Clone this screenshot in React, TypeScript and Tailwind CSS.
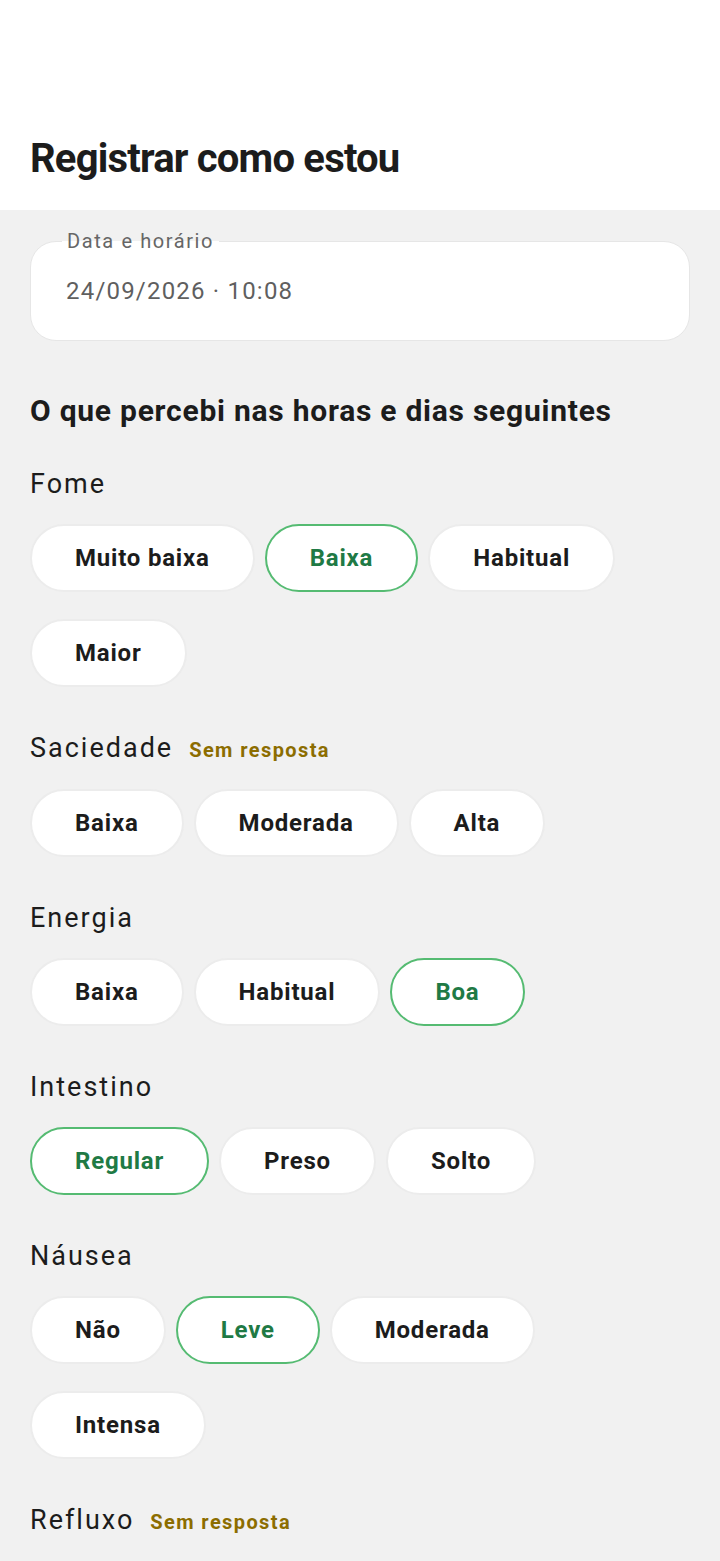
import React from "react";

type Question = {
  label: string;
  options: string[];
  selected?: string;
};

const QUESTIONS: Question[] = [
  { label: "Fome", options: ["Muito baixa", "Baixa", "Habitual", "Maior"], selected: "Baixa" },
  { label: "Saciedade", options: ["Baixa", "Moderada", "Alta"] },
  { label: "Energia", options: ["Baixa", "Habitual", "Boa"], selected: "Boa" },
  { label: "Intestino", options: ["Regular", "Preso", "Solto"], selected: "Regular" },
  { label: "Náusea", options: ["Não", "Leve", "Moderada", "Intensa"], selected: "Leve" },
  { label: "Refluxo", options: ["Não", "Leve", "Moderada", "Intensa"] },
];

function Chip({ label, active }: { label: string; active: boolean }) {
  return (
    <button
      type="button"
      className={
        active
          ? "h-[68px] rounded-full border-[2.5px] border-[#55bb72] bg-white px-[43px] text-[24px] font-bold tracking-[0.8px] text-[#1f7a45]"
          : "h-[68px] rounded-full border-[2.5px] border-[#ececec] bg-white px-[43px] text-[24px] font-bold tracking-[0.8px] text-[#1c1c1c]"
      }
    >
      {label}
    </button>
  );
}

function QuestionBlock({ q }: { q: Question }) {
  return (
    <section>
      <div className="flex items-baseline gap-4">
        <h3 className="text-[27px] leading-[32px] tracking-[2px] text-[#1c1c1c]">{q.label}</h3>
        {!q.selected && (
          <span className="text-[20px] font-bold tracking-[1.4px] text-[#8c6d00]">Sem resposta</span>
        )}
      </div>
      <div className="mt-[24px] flex flex-wrap gap-x-[10px] gap-y-[27px]">
        {q.options.map((o) => (
          <Chip key={o} label={o} active={o === q.selected} />
        ))}
      </div>
    </section>
  );
}

export default function App() {
  return (
    <div className="min-h-screen bg-[#f1f1f1] font-['Roboto',sans-serif]">
      <header className="h-[210px] bg-white px-[30px] pt-[135px]">
        <h1 className="text-[40px] font-bold leading-[48px] tracking-[-0.02em] text-[#1c1c1c]">
          Registrar como estou
        </h1>
      </header>

      <main className="px-[30px] pt-[31px] pb-10">
        <div className="relative h-[100px] rounded-[26px] border border-[#e6e6e6] bg-white">
          <span className="absolute -top-[13px] left-[31px] bg-[linear-gradient(to_bottom,#f1f1f1_50%,#ffffff_50%)] px-[5px] text-[20px] leading-[24px] tracking-[1.6px] text-[#666666]">
            Data e horário
          </span>
          <div className="flex h-full items-center px-[35px] text-[24px] tracking-[1.2px] text-[#5f5f5f]">
            24/09/2026 · 10:08
          </div>
        </div>

        <h2 className="mt-[52px] text-[30px] font-bold leading-[36px] tracking-[0.75px] text-[#1c1c1c]">
          O que percebi nas horas e dias seguintes
        </h2>

        <div className="mt-[39px] flex flex-col gap-[45px]">
          {QUESTIONS.map((q) => (
            <QuestionBlock key={q.label} q={q} />
          ))}
        </div>
      </main>
    </div>
  );
}
